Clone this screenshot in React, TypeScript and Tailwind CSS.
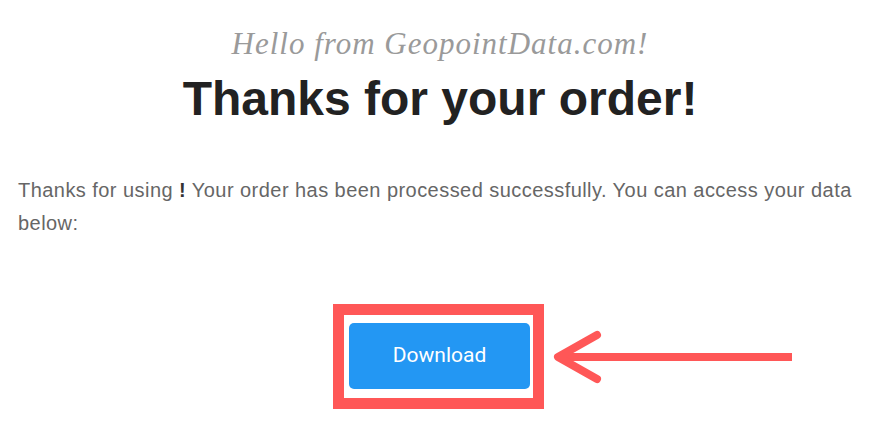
export default function App() {
  return (
    <div className="w-[870px] h-[427px] bg-white overflow-hidden pl-[18px] pr-[8px]">
      {/* Header */}
      <div className="pt-[27px] text-center">
        <div
          className="text-[31px] leading-[34px] italic tracking-[1px] text-[#9a9a9a]"
          style={{ fontFamily: 'Georgia, "Liberation Serif", serif' }}
        >
          Hello from GeopointData.com!
        </div>
        <h1
          className="mt-[10px] text-[48px] leading-[56px] font-bold text-[#222222]"
          style={{ fontFamily: '"Liberation Sans", Arial, sans-serif' }}
        >
          Thanks for your order!
        </h1>
      </div>

      {/* Body */}
      <p
        className="mt-[47px] text-[20px] leading-[33px] tracking-[0.45px] text-[#666666]"
        style={{ fontFamily: '"Liberation Sans", Arial, sans-serif' }}
      >
        Thanks for using <b className="text-[#333333]">!</b> Your order has been processed successfully. You can access your data below:
      </p>

      {/* Download button with highlight */}
      <div className="mt-[64px] flex items-center pl-[315px]">
        <div className="border-[11px] border-[#ff5757] pt-[8px] pb-[9px] pl-[5px] pr-[3px]">
          <button
            className="w-[181px] h-[66px] rounded-[5px] bg-[#2397f3] text-white text-[21px]"
            style={{ fontFamily: 'Roboto, "Noto Sans", sans-serif' }}
          >
            Download
          </button>
        </div>
        <svg width="243" height="56" viewBox="0 0 243 56" className="ml-[8px]">
          <line x1="8" y1="28" x2="240" y2="28" stroke="#ff5757" strokeWidth="8" />
          <polyline
            points="45,6 6,28 45,50"
            fill="none"
            stroke="#ff5757"
            strokeWidth="8"
            strokeLinecap="round"
            strokeLinejoin="round"
          />
        </svg>
      </div>
    </div>
  );
}
